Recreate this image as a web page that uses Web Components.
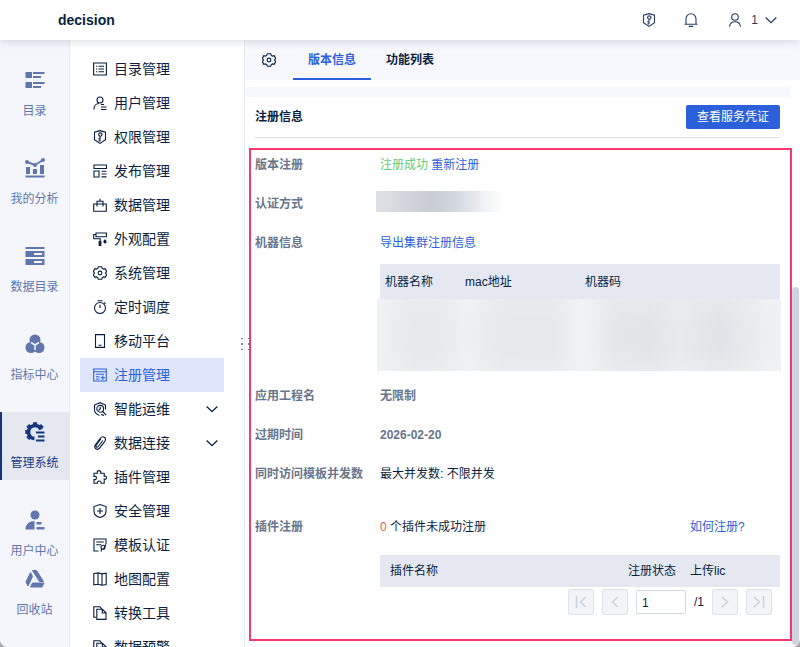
<!DOCTYPE html>
<html lang="zh-CN">
<head>
<meta charset="utf-8">
<title>decision</title>
<style>
  html, body { margin: 0; height: 100%; }
  body {
    background: #a9abb0;
    color: #091e40;
    font: 12px/18px "Liberation Sans", "Noto Sans CJK SC", sans-serif;
    overflow: hidden;
  }
</style>
</head>
<body>
<decision-app></decision-app>
<script>
const ICONS = {
  // 20 x 20, navigation rail
  catalog: [20, '<g fill="currentColor"><path d="M.5 2h6.500v6H.5zM.5 12h6.500v6H.5zM8 2h11.500v2H8zM8 6h8v2H8zM8 12h11.500v2H8zM8 16h8v2H8z"/></g>'],
  analysis: [20, '<g fill="currentColor"><path d="M1 9h4v7H1zM8 11h4v5H8zM15 7h4v9h-4zM.5 17.500h19v2H.5z"/><circle cx="2" cy="4" r="2"/><circle cx="10" cy="7" r="2"/><circle cx="18" cy="2" r="2"/></g><path d="M2 4l8 3 8-5" fill="none" stroke="currentColor" stroke-width="2"/>'],
  data: [20, '<path fill="currentColor" fill-rule="evenodd" d="M.5 1h19v2H.5zM.5 5h19v6H.5zM9 7v2h8V7zM.5 13h19v6H.5zM9 15v2h8v-2z"/>'],
  metric: [20, '<g fill="currentColor"><circle cx="10" cy="6" r="5.500"/><circle cx="6" cy="13.500" r="5.500"/><circle cx="14" cy="13.500" r="5.500"/></g><path d="M10 16v-5L6 8.500M10 11l4-2.500" fill="none" stroke="#f4f6fb" stroke-width="1.500"/>'],
  system: [20, '<path d="M16 7.500A6.500 6.500 0 1 0 9.500 16.500" fill="none" stroke="currentColor" stroke-width="3.600"/><path d="M8 .3h4V4H8zM1.300 4.800l2.800-2.800 2.700 2.200-3 3.300zM.3 8h3.500v4H.3zM3.800 12.500l3 3.300-2.700 2.200-2.800-2.800zM13.500 4.500L16 2l2.700 2.800-2.500 2.700z" fill="currentColor"/><path fill="currentColor" d="M11 9.500h8.500v2H11zM13 13.500h6.500v2H13zM11 17.500h8.500v2H11z"/>'],
  user: [20, '<g fill="currentColor"><circle cx="10" cy="5" r="4.500"/><path d="M9.500 11v8.500H.5V19c0-4.500 4-8 9-8zM11.500 12h5v2.500h-5zM11.500 17h8v2.500h-8z"/></g>'],
  recycle: [20, '<g fill="currentColor" stroke="currentColor" stroke-linejoin="round"><path d="M7.500 1.500h4l7 11h-4zM5.500 3.500l2 4-4.500 9.500-2-4zM7.500 14h11.500l-2 4H5.500z"/></g>'],
  // 14 x 14, menu
  list: [14, '<path class="l" d="M.6 1h12.800v12H.6zM5.500 4.200h5.500M5.500 7h5.500M5.500 9.800h5.500M3 4.200h1.200M3 7h1.200M3 9.800h1.200"/>'],
  person: [14, '<path class="l" d="M1 13.500c0-3.500 2-6 5-6M8 8.500h3M8 11h5.500M8 13.500h5.500"/><circle class="l" cx="7" cy="4" r="3"/>'],
  shield: [14, '<path class="l" d="M7 .6l5.500 1.600v7.600L7 13.400 1.500 9.800V2.200z"/><circle class="l" cx="7.300" cy="4.600" r="1.700"/><path class="l" d="M7 6.300v5M7 8.700H5.200M7 10.900H5.500"/>'],
  publish: [14, '<path class="l" d="M1 1h12.500v3.500H1zM1 7h5v6H1zM8.500 7.200h5M8.500 10h5M8.500 12.900h5"/>'],
  toolbox: [14, '<path class="l" d="M.7 6h12.600v7.300H.7zM4 6V3.200h6V6M7 .8v2.400M4 6v2.500M10 6v2.500"/>'],
  roller: [14, '<path class="l" d="M3 1h10.400v3.700H3zM3 2.500H.7v4.300h6.500V9"/><path fill="currentColor" d="M5.600 9h2.800v5H5.600zM12 7c1 1.400 1.600 2 1.600 2.800a1.600 1.600 0 0 1-3.200 0C10.400 9 11 8.400 12 7z"/>'],
  gear: [14, '<path class="l" d="M5.300.7h3.400l.5 1.700 1.300.7 1.700-.4 1.500 2.700L12.500 7l1.200 1.600-1.500 2.700-1.700-.4-1.300.7-.5 1.700H5.300l-.5-1.700-1.300-.7-1.700.4L.3 8.600 1.500 7 .3 5.400l1.500-2.700 1.700.4 1.300-.7z"/><circle class="l" cx="7" cy="7" r="1.900"/>'],
  timer: [14, '<circle class="l" cx="7" cy="8" r="5.500"/><path class="l" d="M4.500.7h5M7 4.800V8M11 2.300l1.500 1.500"/>'],
  mobile: [14, '<path class="l" d="M2.500.6h9v12.800h-9zM5.500 11.200h3"/>'],
  register: [14, '<path class="l" d="M.7 1h12.600v12H.7zM.7 3.700h12.600M3 6.300h8M3 8.700h3.500M3 11h3.500M9.800 7.500v4.500M7.500 9.700h4.600"/>'],
  ops: [14, '<path class="l" d="M12.500 7.500V3L7 .7 1.500 3v5c0 2.500 2 4.300 5 5.400"/><circle class="l" cx="7.200" cy="6.800" r="3.400"/><path class="l" d="M9.700 9.500l3.500 3.700M5.500 8.500l2-2L7 5M8 12.500l3 .9"/>'],
  clip: [14, '<path class="l" d="M11.800 5.300L7 11.700c-1.300 1.700-3 2-4.200 1.100-1.300-1-1.300-2.700-.2-4.200L7.300 2.400c1-1.400 2.500-2.100 4-1.200 1.600 1.100 1.500 2.700.5 4.100zM9.800 4.500l-4.500 6c-.6.800-1.500.900-2 .3-.5-.6-.3-1.300.2-2L7.800 3"/>'],
  puzzle: [14, '<path class="l" d="M1 3.300h3.500c-.8-1.500.2-2.700 1.500-2.700s2.300 1.200 1.500 2.700h3.700v3c1.500-.6 2.300.3 2.300 1.400s-.8 2-2.300 1.400v4.200H8c.5-1.500-.7-2.300-1.800-2.300s-2.200.8-1.700 2.300H1V9.500c1.700.4 2.500-.6 2.500-1.700S2.700 6 1 6.500z"/>'],
  safe: [14, '<path class="l" d="M7 .6l6 2v4.600c0 3-2.500 5.300-6 6.300-3.500-1-6-3.300-6-6.300V2.600zM7 4v6M4 7h6"/>'],
  cert: [14, '<path class="l" d="M5.500 13H1V1h12v5M3.200 4h7.600M3.200 6.700h5"/><circle class="l" cx="10" cy="9.200" r="2"/><path class="l" d="M8.800 10.800l-.8 2.700M10.500 11l2.500-4.800"/>'],
  map: [14, '<path class="l" d="M.8 1.500L5 .9l4 1 4.200-.8v11.500L9 13.200l-4-1-4.200.7zM5 .9v11.300M9 1.900v11.300"/>'],
  copy: [14, '<path class="l" d="M3.800 3.300h5.700l3.500 3.500v6.600H3.800zM9.300 3.500V7H13M3 11.300H.8V.8h6l2 2"/>'],
  down: [14, '<path class="l" style="stroke-width:1.300" d="M1.700 4.500L7 9.700l5.300-5.200"/>'],
  // 14 x 14, header and pager
  bell: [14, '<path class="l" d="M.5 11.200h13M2 11.200V6c0-3 2-5.200 5-5.200S12 3 12 6v5.200M4.800 13.400h4.400"/>'],
  account: [14, '<circle class="l" cx="7" cy="4" r="3.300"/><path class="l" d="M1.500 13.800c.4-3.300 2.500-5 5.500-5s5.100 1.700 5.500 5"/>'],
  first: [14, '<path class="l" style="stroke-width:1.500" d="M2.500 1v12M12 2L6.500 7l5.500 5"/>'],
  prev: [14, '<path class="l" style="stroke-width:1.500" d="M10 2L4.500 7l5.500 5"/>'],
  next: [14, '<path class="l" style="stroke-width:1.500" d="M4 2l5.500 5L4 12"/>'],
  last: [14, '<path class="l" style="stroke-width:1.500" d="M11.500 1v12M2 2l5.500 5L2 12"/>']
};

function define(name, css, html) {
  customElements.define(name, class extends HTMLElement {
    connectedCallback() {
      if (this.shadowRoot) return;
      const root = this.attachShadow({ mode: 'open' });
      root.innerHTML = `<style>*{box-sizing:border-box}${css}</style>` +
        (typeof html === 'function' ? html(this) : html);
    }
  });
}

define('ui-icon', `
  :host { display: block; flex: none; }
  svg { display: block; }
  .l { fill: none; stroke: currentColor; stroke-width: 1.1; }
`, el => {
  const [size, body] = ICONS[el.getAttribute('name')];
  return `<svg width="${size}" height="${size}" viewBox="0 0 ${size} ${size}" aria-hidden="true">${body}</svg>`;
});

define('app-header', `
  :host {
    display: flex; align-items: center; height: 40px; flex: none; box-sizing: border-box;
    padding: 0 22px 0 58px; background: #fff; position: relative; z-index: 2;
    box-shadow: 0 2px 8px rgba(9, 30, 64, .14);
  }
  h1 { margin: 0; flex: 1; font-size: 14px; line-height: 20px; }
  nav { display: flex; gap: 28px; align-items: center; color: #2a3d63; }
  button {
    display: flex; align-items: center; gap: 6px; border: 0; padding: 0;
    background: none; font: inherit; color: inherit;
  }
  .account { margin-left: 2px; }
  .account span { padding-left: 3px; }
`, `
  <h1>decision</h1>
  <nav>
    <button aria-label="权限"><ui-icon name="shield"></ui-icon></button>
    <button aria-label="消息"><ui-icon name="bell"></ui-icon></button>
    <button class="account"><ui-icon name="account"></ui-icon><span>1</span><ui-icon name="down"></ui-icon></button>
  </nav>
`);

define('rail-item', `
  :host { display: block; flex: none; color: #6076ad; }
  a {
    display: flex; flex-direction: column; align-items: center; gap: 12px; height: 68px;
    padding-top: 10px; color: inherit; text-decoration: none; white-space: nowrap;
  }
  :host([selected]) { color: #173680; }
  :host([selected]) a { background: #e5e8f1; box-shadow: inset 2px 0 #173680; }
`, el => `<a href="#"><ui-icon name="${el.getAttribute('icon')}"></ui-icon><span><slot></slot></span></a>`);

define('app-rail', `
  :host {
    display: flex; flex-direction: column; flex: none; width: 70px; box-sizing: border-box;
    padding: 0 0 20px; background: #f4f6fb; border-right: 1px solid #e8eaf1;
  }
  nav { display: flex; flex-direction: column; gap: 20px; padding-top: 20px; flex: 1; min-height: 0; overflow: hidden; }
`, `
  <nav>
    <rail-item icon="catalog">目录</rail-item>
    <rail-item icon="analysis">我的分析</rail-item>
    <rail-item icon="data">数据目录</rail-item>
    <rail-item icon="metric">指标中心</rail-item>
    <rail-item icon="system" selected>管理系统</rail-item>
    <rail-item icon="user">用户中心</rail-item>
  </nav>
  <rail-item icon="recycle">回收站</rail-item>
`);

define('menu-item', `
  :host { display: block; flex: none; }
  a {
    display: flex; align-items: center; gap: 7px; height: 34px; padding: 0 5px 0 13px;
    font-size: 14px; line-height: 20px; color: inherit; text-decoration: none; white-space: nowrap;
  }
  span { flex: 1; }
  :host([selected]) { color: #2c60db; background: #dfe6fb; }
`, el => `<a href="#"><ui-icon name="${el.getAttribute('icon')}"></ui-icon><span><slot></slot></span>${
  el.hasAttribute('expandable') ? '<ui-icon name="down"></ui-icon>' : ''}</a>`);

define('side-menu', `
  :host {
    display: block; flex: none; width: 175px; box-sizing: border-box; position: relative;
    border-right: 1px solid #e8eaf1; background: #fff;
  }
  nav { height: 100%; padding: 12px 20px 0 10px; overflow: hidden; display: flex; flex-direction: column; }
  .grip { position: absolute; right: -6px; top: 297px; color: #75819b; }
  .grip svg { display: block; }
`, `
  <nav>
    <menu-item icon="list">目录管理</menu-item>
    <menu-item icon="person">用户管理</menu-item>
    <menu-item icon="shield">权限管理</menu-item>
    <menu-item icon="publish">发布管理</menu-item>
    <menu-item icon="toolbox">数据管理</menu-item>
    <menu-item icon="roller">外观配置</menu-item>
    <menu-item icon="gear">系统管理</menu-item>
    <menu-item icon="timer">定时调度</menu-item>
    <menu-item icon="mobile">移动平台</menu-item>
    <menu-item icon="register" selected>注册管理</menu-item>
    <menu-item icon="ops" expandable>智能运维</menu-item>
    <menu-item icon="clip" expandable>数据连接</menu-item>
    <menu-item icon="puzzle">插件管理</menu-item>
    <menu-item icon="safe">安全管理</menu-item>
    <menu-item icon="cert">模板认证</menu-item>
    <menu-item icon="map">地图配置</menu-item>
    <menu-item icon="copy">转换工具</menu-item>
    <menu-item icon="copy">数据预警</menu-item>
  </nav>
  <div class="grip"><svg width="9" height="14" viewBox="0 0 9 14" fill="currentColor" aria-hidden="true"><path d="M0 1h2v1H0zM0 6h2v2H0zM0 12h2v1H0zM7 1h2v1H7zM7 6h2v2H7zM7 12h2v1H7z"/></svg></div>
`);

define('tab-bar', `
  :host { display: flex; align-items: stretch; height: 40px; flex: none; background: #f7f8fd; }
  .gear { display: flex; align-items: center; border: 0; background: none; padding: 0 17px; color: inherit; }
  a {
    display: flex; align-items: center; padding: 0 15px; font-weight: bold;
    color: inherit; text-decoration: none; border-bottom: 2px solid transparent; border-top: 2px solid transparent;
  }
  a[aria-current] { color: #2c60db; border-bottom-color: #2c60db; }
`, `
  <button class="gear" aria-label="设置"><ui-icon name="gear"></ui-icon></button>
  <a href="#" aria-current="page">版本信息</a>
  <a href="#">功能列表</a>
`);

define('info-row', `
  :host { display: flex; padding-bottom: 21px; }
  .label { flex: none; width: 125px; font-weight: bold; color: #69758b; white-space: nowrap; }
  .value { flex: 1; min-width: 0; }
`, el => `<div class="label">${el.getAttribute('label')}</div><div class="value"><slot></slot></div>`);

define('page-nav', `
  :host { display: flex; justify-content: flex-end; align-items: center; gap: 8px; padding: 2px 8px 0 0; }
  button {
    display: flex; align-items: center; justify-content: center; width: 26px; height: 26px;
    padding: 0; background: #f2f4f8; border: 1px solid #dfe2ea; border-radius: 2px; color: #cdd1da;
  }
  input {
    width: 50px; height: 24px; padding: 2px 5px 0; border: 1px solid #d4d9e3; border-radius: 2px;
    font: inherit; color: inherit; background: #fff;
  }
`, `
  <button disabled aria-label="首页"><ui-icon name="first"></ui-icon></button>
  <button disabled aria-label="上一页"><ui-icon name="prev"></ui-icon></button>
  <input value="1" aria-label="页码">
  <span>/1</span>
  <button disabled aria-label="下一页"><ui-icon name="next"></ui-icon></button>
  <button disabled aria-label="末页"><ui-icon name="last"></ui-icon></button>
`);

define('registration-page', `
  :host { display: flex; flex: 1; min-height: 0; position: relative; }
  .scroll { flex: 1; min-width: 0; }
  .strip { height: 10px; margin: 7px 10px 0 0; background: #f7f8fd; }
  header {
    display: flex; align-items: center; justify-content: space-between; height: 41px;
    margin: 0 20px 10px 10px; border-bottom: 1px solid #dadde5;
  }
  h2 { margin: 0; font-size: 12px; line-height: 18px; }
  header button {
    height: 24px; padding: 0 11px; border: 0; border-radius: 2px;
    background: #2c60db; color: #fff; font: inherit;
  }
  section { margin: 0 8px 0 4px; padding: 6px 10px 3px 4px; border: 2px solid #f5396d; }
  a { color: #2c60db; text-decoration: none; }
  .ok { color: #61ca7d; }
  .bad { color: #eb5058; }
  .muted { font-weight: bold; color: #69758b; }
  .tall { padding-bottom: 16px; }
  .wide { padding-bottom: 35px; }
  .fit { height: 39px; }
  .mask {
    width: 128px; height: 21px; margin: -4px 0 0 -4px;
    background: linear-gradient(90deg, #dfe0e4, #d8dae0 15%, #c8ccd5 43%, #d3d7e0 62%, #f1f2f5 85%, #fff);
  }
  table { width: 100%; margin-top: 12px; border-collapse: collapse; table-layout: fixed; background: #e5e8f0; }
  th { padding: 0 5px; height: 35px; font-weight: normal; text-align: left; white-space: nowrap; }
  .plugins { margin-top: 19px; }
  .plugins th { height: 32px; padding: 0 10px; }
  .machine {
    height: 72px; margin: 0 -1px 0 -3px;
    background:
      linear-gradient(180deg, rgba(240,241,245,.35), transparent 40%, transparent 65%, rgba(240,241,245,.5)),
      linear-gradient(90deg, #f1f2f5, #e6e8ec 9%, #e6e8ec 14%, #eff0f3 22%, #e6e7eb 32%, #e5e8eb 43%, #f1f2f5 51%, #e3e5e9 60%, #e2e4e8 68%, #e8eaed 75%, #e0e3e7 85%, #f1f2f6);
  }
  .split { display: flex; justify-content: space-between; }
  .split a { width: 90px; }
  .thumb {
    position: absolute; right: 1px; top: 207px; bottom: 2px; width: 7px;
    border-radius: 4px; background: #d0d4de;
  }
`, `
  <div class="scroll">
    <div class="strip"></div>
    <header><h2>注册信息</h2><button>查看服务凭证</button></header>
    <section>
      <info-row label="版本注册"><span class="ok">注册成功</span> <a href="#">重新注册</a></info-row>
      <info-row label="认证方式"><div class="mask"></div></info-row>
      <info-row class="tall" label="机器信息">
        <a href="#">导出集群注册信息</a>
        <table>
          <colgroup><col style="width:80px"><col style="width:120px"><col></colgroup>
          <thead><tr><th>机器名称</th><th>mac地址</th><th>机器码</th></tr></thead>
        </table>
        <div class="machine"></div>
      </info-row>
      <info-row label="应用工程名"><span class="muted">无限制</span></info-row>
      <info-row label="过期时间"><span class="muted">2026-02-20</span></info-row>
      <info-row class="wide" label="同时访问模板并发数">最大并发数: 不限并发</info-row>
      <info-row label="插件注册">
        <div class="split"><span><span class="bad">0</span> 个插件未成功注册</span><a href="#">如何注册?</a></div>
        <table class="plugins">
          <colgroup><col><col style="width:62px"><col style="width:100px"></colgroup>
          <thead><tr><th>插件名称</th><th>注册状态</th><th>上传lic</th></tr></thead>
        </table>
        <page-nav></page-nav>
      </info-row>
    </section>
  </div>
  <div class="thumb"></div>
`);

define('decision-app', `
  :host {
    display: flex; flex-direction: column; height: 100vh; overflow: hidden;
    background: #fff; border-radius: 0 0 8px 8px;
  }
  .body { display: flex; flex: 1; min-height: 0; }
  main { display: flex; flex-direction: column; flex: 1; min-width: 0; }
`, `
  <app-header></app-header>
  <div class="body">
    <app-rail></app-rail>
    <side-menu></side-menu>
    <main>
      <tab-bar></tab-bar>
      <registration-page></registration-page>
    </main>
  </div>
`);
</script>
</body>
</html>
